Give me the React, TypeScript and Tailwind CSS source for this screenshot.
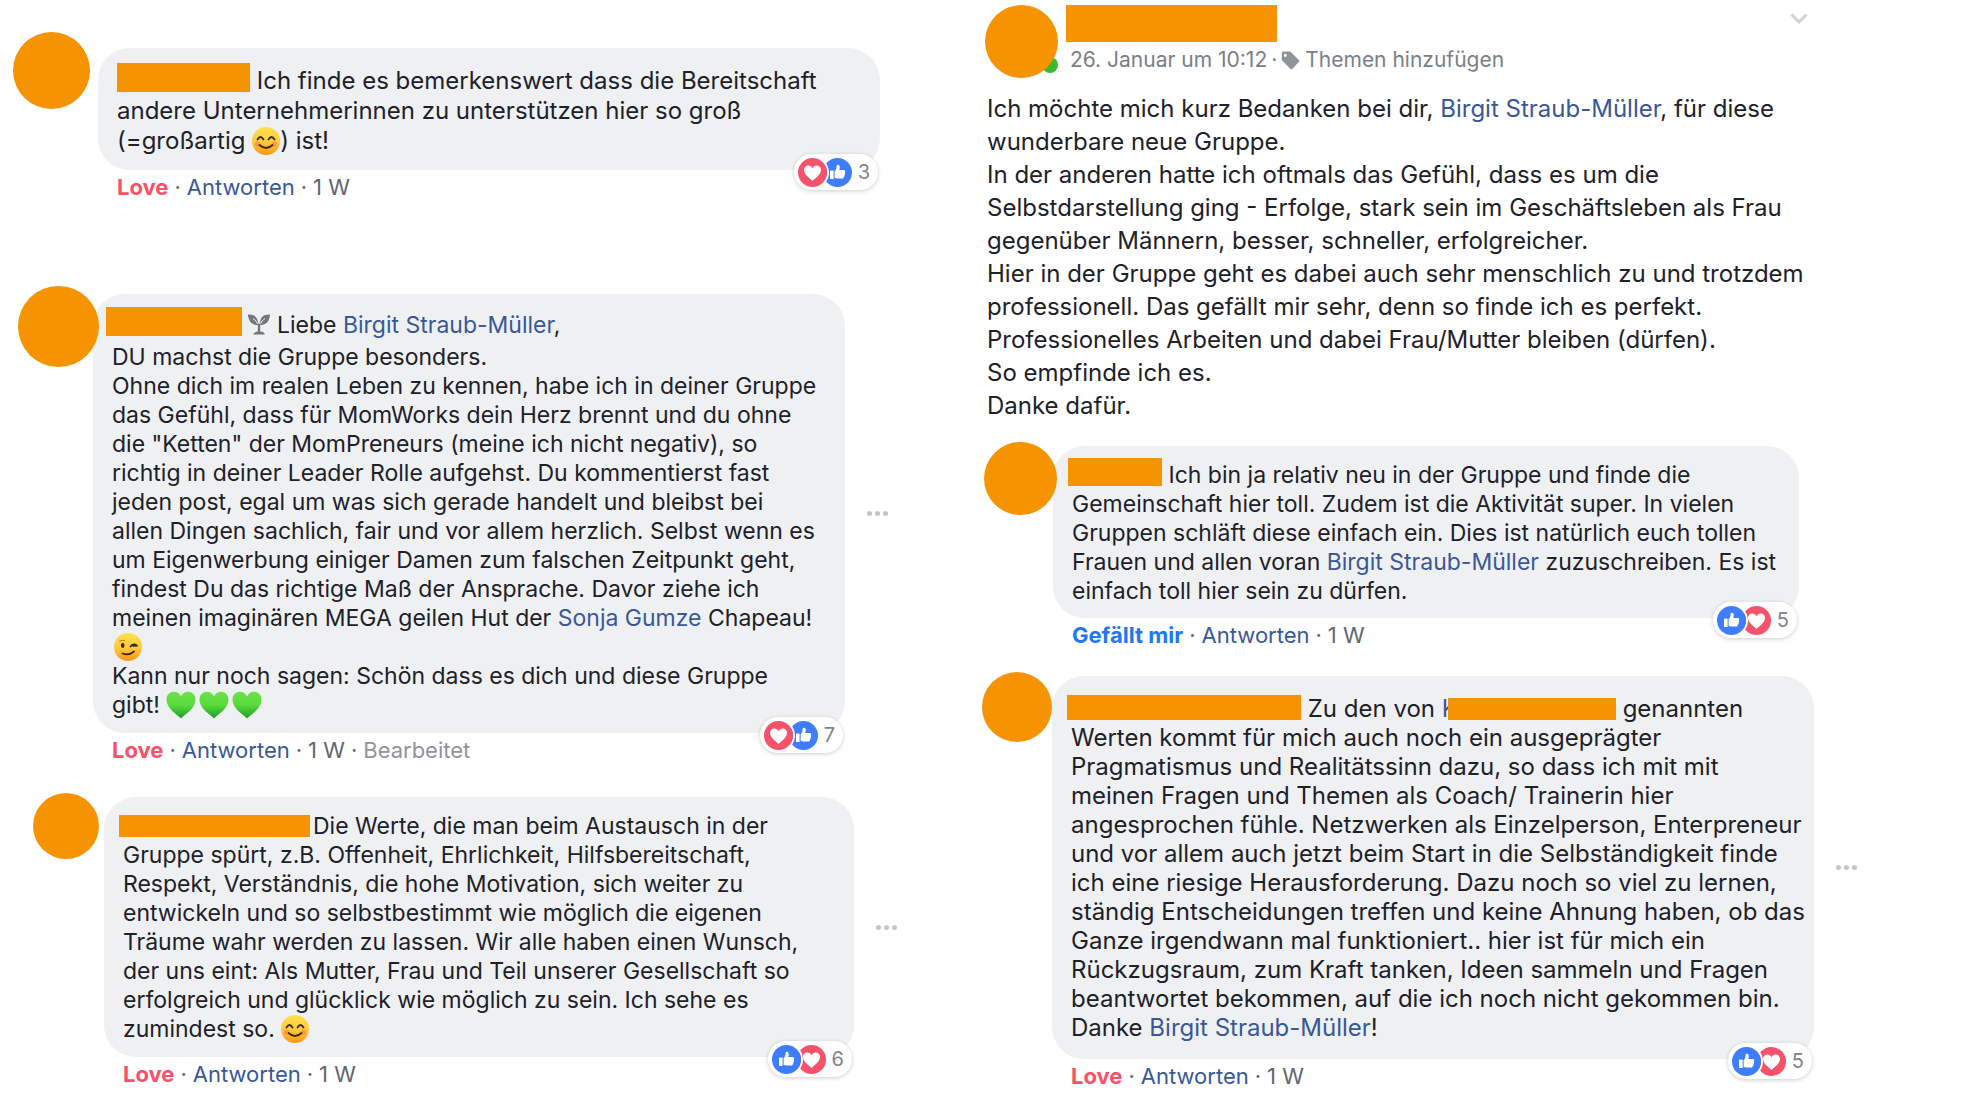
import React from 'react';

const Smile = () => (
	<svg viewBox="0 0 28 28" className="inline-block w-[28px] h-[28px] -my-2 align-[2px]" role="img" aria-label="Lächeln">
		<defs>
			<linearGradient id="face" x1="0" y1="0" x2="0" y2="1">
				<stop offset="0" stopColor="#ffe14d" />
				<stop offset="0.55" stopColor="#ffc83a" />
				<stop offset="1" stopColor="#fb9413" />
			</linearGradient>
		</defs>
		<circle cx="14" cy="14" r="14" fill="url(#face)" />
		<circle cx="5.5" cy="17" r="2.6" fill="#fb7a5c" opacity="0.6" />
		<circle cx="22.5" cy="17" r="2.6" fill="#fb7a5c" opacity="0.6" />
		<path d="M5.5 12.5Q8.5 7.5 11.5 12.5M16.5 12.5Q19.5 7.5 22.5 12.5" fill="none" stroke="#3b2a14" strokeWidth="1.8" strokeLinecap="round" />
		<path d="M7.5 18Q14 24 20.5 18" fill="none" stroke="#3b2a14" strokeWidth="1.8" strokeLinecap="round" />
	</svg>
);

const Wink = () => (
	<svg viewBox="0 0 28 28" className="inline-block w-[28px] h-[28px] ml-0.5 -my-2 align-[2px]" role="img" aria-label="Zwinkern">
		<defs>
			<linearGradient id="wink" x1="0" y1="0" x2="0" y2="1">
				<stop offset="0" stopColor="#ffe14d" />
				<stop offset="0.55" stopColor="#ffc83a" />
				<stop offset="1" stopColor="#fb9413" />
			</linearGradient>
		</defs>
		<circle cx="14" cy="14" r="14" fill="url(#wink)" />
		<ellipse cx="8.7" cy="12.5" rx="1.8" ry="2.4" fill="#3b2a14" />
		<path d="M5.5 8.2Q8 6.2 10.5 7.6" fill="none" stroke="#c98212" strokeWidth="1" strokeLinecap="round" />
		<path d="M16.5 13.5Q19.5 9.8 23 12.6L19 12.8" fill="none" stroke="#3b2a14" strokeWidth="1.7" strokeLinecap="round" strokeLinejoin="round" />
		<path d="M8.5 20.5Q15 22.8 20 18.5" fill="none" stroke="#3b2a14" strokeWidth="1.8" strokeLinecap="round" />
	</svg>
);

const GreenHeart = () => (
	<svg viewBox="0 0 30 28" className="inline-block w-[30px] h-[28px] mr-[3px] -my-2 align-[2px]" role="img" aria-label="Grünes Herz">
		<defs>
			<linearGradient id="green" x1="0" y1="0" x2="0" y2="1">
				<stop offset="0" stopColor="#6fe04a" />
				<stop offset="0.5" stopColor="#58dc3c" />
				<stop offset="1" stopColor="#1f9a27" />
			</linearGradient>
		</defs>
		<path d="M15 27.5C11 23 0.5 18 0.5 8.5C0.5 4 3.8 0.8 7.8 0.8C11 0.8 13.8 2.6 15 5.6C16.2 2.6 19 0.8 22.2 0.8C26.2 0.8 29.5 4 29.5 8.5C29.5 18 19 23 15 27.5Z" fill="url(#green)" />
	</svg>
);

const Sprout = () => (
	<svg viewBox="0 0 22 21" className="inline-block w-[22px] h-[21px] mb-2 -mt-2 align-[-10px]" fill="#72767d" role="img" aria-label="Keimling">
		<path d="M0 0.6C6 0.2 10.6 3 10 11C4 11.4 0.4 7.4 0 0.6Z" />
		<path d="M22 0.6C16 0.2 11.4 3 12 11C18 11.4 21.6 7.4 22 0.6Z" />
		<path d="M5 4.5Q8.5 6.5 9.5 10M17 4.5Q13.5 6.5 12.5 10" fill="none" stroke="#eff0f2" strokeWidth="1" />
		<path d="M9.8 9.5H12.2V17.6Q16 17.8 17 20.6H5Q6 17.8 9.8 17.6Z" />
	</svg>
);

const LoveIcon = () => (
	<svg viewBox="0 0 29 29" className="size-[29px]">
		<circle cx="14.5" cy="14.5" r="14.5" fill="#f8516a" />
		<path d="M14.5 23C12.5 20.6 6 17.4 6 11.8C6 9.3 7.9 7.6 10.2 7.6C12.1 7.6 13.7 8.6 14.5 10.3C15.3 8.6 16.9 7.6 18.8 7.6C21.1 7.6 23 9.3 23 11.8C23 17.4 16.5 20.6 14.5 23Z" fill="#fff" />
	</svg>
);

const LikeIcon = () => (
	<svg viewBox="0 0 29 29" className="size-[29px]">
		<circle cx="14.5" cy="14.5" r="14.5" fill="#3f7dff" />
		<path d="M7 12.6H10.6V21H7Z" fill="#fff" />
		<path d="M11.6 19.8V13C13 12 13.6 10.4 13.6 8.2C13.6 6.2 16.8 6.2 16.8 9.2C16.8 10.4 16.5 11.2 16.2 12H20.8C22.4 12 22.6 13.8 21.7 14.4C22.5 15 22.2 16.4 21.4 16.7C21.9 17.5 21.5 18.6 20.7 18.8C21 19.8 20.3 20.6 19.2 20.6H14.4C13.2 20.6 12.4 20.3 11.6 19.8Z" fill="#fff" />
	</svg>
);

const TagIcon = () => (
	<svg viewBox="0 0 20 20" className="size-[19px]">
		<path fillRule="evenodd" d="M2.2 0.6H9.6L18.8 9.4Q19.8 10.4 18.8 11.4L12 19Q11 20 10 19L0.8 9.6V2Q0.8 0.6 2.2 0.6ZM4.6 3A1.6 1.6 0 1 0 4.6 6.2A1.6 1.6 0 1 0 4.6 3Z" fill="#8f949b" />
	</svg>
);

const Person = ({ children }: { children: React.ReactNode }) => (
	<a href="#" className="text-[#385898]">{children}</a>
);

// Covered name
const Bar = ({ className }: { className: string }) => (
	<span className={"relative inline-block -mt-4 align-[-3px] bg-[#f59300] " + className} />
);

interface CommentProps {
	className: string;
	avatar: string;
	body: string;
	bubble: string;
	text: string;
	first: 'love' | 'like';
	count: number;
	liked?: boolean;
	edited?: boolean;
	menu?: boolean;
	children: React.ReactNode;
}

const Comment = ({ className, avatar, body, bubble, text, first, count, liked, edited, menu, children }: CommentProps) => (
	<article className={"flex items-start " + className}>
		<div className={"relative z-10 shrink-0 rounded-full bg-[#f59300] " + avatar} />
		<div className={"flex-1 " + body}>
			<div className="flex items-center gap-[22px]">
				<div className={"relative flex-1 rounded-[32px] bg-[#eff0f2] pl-[19px] " + bubble}>
					<p className={"whitespace-nowrap " + text}>{children}</p>
					<div className="absolute right-0.5 -bottom-5 flex h-9 items-center rounded-full bg-white pl-1 pr-2 shadow-[0_1px_4px_rgba(0,0,0,0.2)]">
						<span className="relative z-10 rounded-full ring-2 ring-white">{first === 'love' ? <LoveIcon /> : <LikeIcon />}</span>
						<span className="-ml-1">{first === 'love' ? <LikeIcon /> : <LoveIcon />}</span>
						<span className="ml-1.5 text-[20px] text-[#7f848c]">{count}</span>
					</div>
				</div>
				{menu && (
					<button className="flex gap-[3px] cursor-pointer" aria-label="Mehr">
						<span className="size-[5px] rounded-full bg-[#c3c6cb]" />
						<span className="size-[5px] rounded-full bg-[#c3c6cb]" />
						<span className="size-[5px] rounded-full bg-[#c3c6cb]" />
					</button>
				)}
			</div>
			<div className="flex gap-1.5 pl-[19px] pt-[3px] text-[22px] leading-[29px] text-[#616770]">
				{liked
					? <button className="font-bold text-[#2078f4] cursor-pointer">Gefällt mir</button>
					: <button className="font-bold text-[#f8516a] cursor-pointer">Love</button>}
				<span>·</span>
				<button className="text-[#385898] cursor-pointer">Antworten</button>
				<span>·</span>
				<span>1 W</span>
				{edited && <span>·</span>}
				{edited && <span className="text-[#90949c]">Bearbeitet</span>}
			</div>
		</div>
	</article>
);

export default function App() {
	return (
		<main className="grid grid-cols-[49fr_50fr] bg-white font-['Inter',sans-serif] text-[#1d2129]">
			<section className="pt-8">
				<Comment className="ml-[13px]" avatar="size-[77px]" body="mt-4 ml-2" bubble="max-w-[782px] pt-[18px] pb-[14px]" text="text-[24px] leading-[30px]" first="love" count={3}>
					<Bar className="w-[133px] h-[29px]" /> Ich finde es bemerkenswert dass die Bereitschaft<br />
					andere Unternehmerinnen zu unterstützen hier so groß<br />
					(=großartig <Smile />) ist!
				</Comment>
				<Comment className="mt-[84px] ml-[18px]" avatar="size-[81px]" body="mt-2 -ml-1.5" bubble="max-w-[752px] pt-[17px] pb-[13px]" text="text-[23px] leading-[29px]" first="love" count={7} edited menu>
					<Bar className="-ml-1.5 w-[136px] h-[29px]" /> <Sprout /> Liebe <Person>Birgit Straub-Müller</Person>,<br />
					DU machst die Gruppe besonders.<br />
					Ohne dich im realen Leben zu kennen, habe ich in deiner Gruppe<br />
					das Gefühl, dass für MomWorks dein Herz brennt und du ohne<br />
					die "Ketten" der MomPreneurs (meine ich nicht negativ), so<br />
					richtig in deiner Leader Rolle aufgehst. Du kommentierst fast<br />
					jeden post, egal um was sich gerade handelt und bleibst bei<br />
					allen Dingen sachlich, fair und vor allem herzlich. Selbst wenn es<br />
					um Eigenwerbung einiger Damen zum falschen Zeitpunkt geht,<br />
					findest Du das richtige Maß der Ansprache. Davor ziehe ich<br />
					meinen imaginären MEGA geilen Hut der <Person>Sonja Gumze</Person> Chapeau!<br />
					<Wink /><br />
					Kann nur noch sagen: Schön dass es dich und diese Gruppe<br />
					gibt! <GreenHeart /><GreenHeart /><GreenHeart />
				</Comment>
				<Comment className="mt-7 ml-[33px]" avatar="size-[66px]" body="mt-1 ml-[5px]" bubble="max-w-[750px] pt-[15px] pb-[13px]" text="text-[23px] leading-[29px]" first="like" count={6} menu>
					<Bar className="-ml-1 mr-[3px] w-[191px] h-[22px]" />Die Werte, die man beim Austausch in der<br />
					Gruppe spürt, z.B. Offenheit, Ehrlichkeit, Hilfsbereitschaft,<br />
					Respekt, Verständnis, die hohe Motivation, sich weiter zu<br />
					entwickeln und so selbstbestimmt wie möglich die eigenen<br />
					Träume wahr werden zu lassen. Wir alle haben einen Wunsch,<br />
					der uns eint: Als Mutter, Frau und Teil unserer Gesellschaft so<br />
					erfolgreich und glücklick wie möglich zu sein. Ich sehe es<br />
					zumindest so. <Smile />
				</Comment>
			</section>

			<section className="pt-[5px]">
				<header className="flex max-w-[828px] items-start pl-[5px]">
					<div className="relative size-[73px] shrink-0">
						<span className="absolute right-0 bottom-[5px] size-4 rounded-full bg-[#3bb92f]" />
						<span className="absolute inset-0 rounded-full bg-[#f59300]" />
					</div>
					<div className="ml-2">
						<div className="w-[211px] h-[37px] bg-[#f59300]" />
						<div className="ml-1 mt-1 flex gap-1 text-[21px] leading-[28px] text-[#7a7f87]">
							<span>26. Januar um 10:12</span>
							<span>·</span>
							<a href="#" className="flex items-center gap-[5px]"><TagIcon />Themen hinzufügen</a>
						</div>
					</div>
					<button className="ml-auto mt-2 cursor-pointer" aria-label="Optionen">
						<svg viewBox="0 0 18 12" className="w-[18px] h-3" fill="none" stroke="#cfd1d5" strokeWidth="3">
							<path d="M1.5 1.5L9 9L16.5 1.5" />
						</svg>
					</button>
				</header>
				<p className="pl-[7px] mt-[14px] whitespace-nowrap text-[24px] leading-[33px]">
					Ich möchte mich kurz Bedanken bei dir, <Person>Birgit Straub-Müller</Person>, für diese<br />
					wunderbare neue Gruppe.<br />
					In der anderen hatte ich oftmals das Gefühl, dass es um die<br />
					Selbstdarstellung ging - Erfolge, stark sein im Geschäftsleben als Frau<br />
					gegenüber Männern, besser, schneller, erfolgreicher.<br />
					Hier in der Gruppe geht es dabei auch sehr menschlich zu und trotzdem<br />
					professionell. Das gefällt mir sehr, denn so finde ich es perfekt.<br />
					Professionelles Arbeiten und dabei Frau/Mutter bleiben (dürfen).<br />
					So empfinde ich es.<br />
					Danke dafür.
				</p>
				<Comment className="mt-5 ml-1" avatar="size-[73px]" body="mt-1 -ml-1" bubble="max-w-[746px] pt-[15px] pb-[12px]" text="text-[23px] leading-[29px]" first="like" count={5} liked>
					<Bar className="-ml-1 w-[94px] h-[28px]" /> Ich bin ja relativ neu in der Gruppe und finde die<br />
					Gemeinschaft hier toll. Zudem ist die Aktivität super. In vielen<br />
					Gruppen schläft diese einfach ein. Dies ist natürlich euch tollen<br />
					Frauen und allen voran <Person>Birgit Straub-Müller</Person> zuzuschreiben. Es ist<br />
					einfach toll hier sein zu dürfen.
				</Comment>
				<Comment className="mt-[22px] ml-0.5" avatar="size-[70px]" body="mt-1" bubble="max-w-[762px] pt-[18px] pb-[17px]" text="text-[24px] leading-[29px]" first="like" count={5} menu>
					<Bar className="-ml-1 w-[234px] h-[25px]" /> Zu den von <Person>K</Person><Bar className="-ml-2.5 w-[168px] h-[22px]" /> genannten<br />
					Werten kommt für mich auch noch ein ausgeprägter<br />
					Pragmatismus und Realitätssinn dazu, so dass ich mit mit<br />
					meinen Fragen und Themen als Coach/ Trainerin hier<br />
					angesprochen fühle. Netzwerken als Einzelperson, Enterpreneur<br />
					und vor allem auch jetzt beim Start in die Selbständigkeit finde<br />
					ich eine riesige Herausforderung. Dazu noch so viel zu lernen,<br />
					ständig Entscheidungen treffen und keine Ahnung haben, ob das<br />
					Ganze irgendwann mal funktioniert.. hier ist für mich ein<br />
					Rückzugsraum, zum Kraft tanken, Ideen sammeln und Fragen<br />
					beantwortet bekommen, auf die ich noch nicht gekommen bin.<br />
					Danke <Person>Birgit Straub-Müller</Person>!
				</Comment>
			</section>
		</main>
	);
}
